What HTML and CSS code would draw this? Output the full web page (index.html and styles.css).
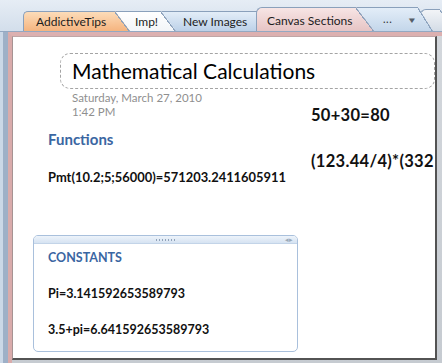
FILE: index.html
```html
<!DOCTYPE html>
<html lang="en">
<head>
  <meta charset="UTF-8" />
  <title>Canvas Sections - OneNote</title>
  <link rel="stylesheet" href="styles.css">
</head>
<body>
  <div class="app">
    <div class="tabbar">
      <div class="tab tab-orange">AddictiveTips</div>
      <div class="tab tab-white">Imp!</div>
      <div class="tab tab-blue">New Images</div>
      <div class="tab tab-active">Canvas Sections</div>
      <div class="tab tab-more"><span class="more-dots">...</span><span class="more-arrow">▼</span></div>
      <div class="tab tab-edge"></div>
    </div>

    <div class="main">
      <div class="rail"></div>
      <div class="frame">
        <div class="page">
          <div class="title-box">
            <h1>Mathematical Calculations</h1>
          </div>

          <div class="content">
            <div class="col-left">
              <div class="date">Saturday, March 27, 2010<br>1:42 PM</div>
              <h2>Functions</h2>
              <p class="calc calc-pmt">Pmt(10.2;5;56000)=571203.2411605911</p>

              <div class="outline">
                <div class="handle">
                  <span class="grip"></span>
                  <span class="resize">◂▸</span>
                </div>
                <div class="outline-body">
                  <h3>CONSTANTS</h3>
                  <p class="calc">Pi=3.141592653589793</p>
                  <p class="calc">3.5+pi=6.641592653589793</p>
                </div>
              </div>
            </div>

            <div class="col-right">
              <p class="big">50+30=80</p>
              <p class="big">(123.44/4)*(332</p>
            </div>
          </div>
        </div>
      </div>
    </div>
  </div>
</body>
</html>
```

FILE: styles.css
```css
body {
  margin: 0;
  width: 442px;
  height: 363px;
  overflow: hidden;
  font-family: Lato, 'Liberation Sans', sans-serif;
  color: #111;
  background: #d8e2ee;
}

.app {
  display: flex;
  flex-direction: column;
  height: 363px;
}

/* ---------- section tabs ---------- */

.tabbar {
  height: 32px;
  box-sizing: border-box;
  padding-left: 23px;
  display: flex;
  align-items: flex-end;
  background: linear-gradient(#e6edf5, #d3deeb);
  border-bottom: 1px solid #93a8c2;
  flex-shrink: 0;
  overflow: hidden;
}

.tab {
  --top: #fff;
  --bot: #eee;
  position: relative;
  flex-shrink: 0;
  height: 20px;
  box-sizing: border-box;
  display: flex;
  align-items: center;
  font-size: 12px;
  color: #1c1c1c;
  white-space: nowrap;
  background: linear-gradient(var(--top), var(--bot));
  border-top: 1px solid #8aa0bb;
}

.tab::after {
  content: "";
  position: absolute;
  top: -1px;
  bottom: 0;
  right: -15px;
  width: 15px;
  background:
    linear-gradient(to bottom left, transparent 50%, #8aa0bb 50%, #8aa0bb calc(50% + 1.2px), transparent calc(50% + 1.2px)),
    linear-gradient(var(--top), var(--bot));
  clip-path: polygon(0 0, 100% 100%, 0 100%);
}

.tab-orange {
  --top: #fcdcb9;
  --bot: #f5b47f;
  width: 92px;
  padding-left: 12px;
  border-left: 1px solid #8aa0bb;
  border-top-left-radius: 5px;
  z-index: 5;
}

.tab-white {
  --top: #ffffff;
  --bot: #f3f5f8;
  width: 46px;
  padding-left: 20px;
  z-index: 4;
}

.tab-blue {
  --top: #e3edf8;
  --bot: #bcd1e8;
  width: 101px;
  padding-left: 22px;
  z-index: 3;
}

.tab-active {
  --top: #f7e5e5;
  --bot: #e6c3c3;
  height: 25px;
  margin-bottom: -1px;
  margin-left: -6px;
  width: 100px;
  padding-left: 10px;
  border-left: 1px solid #8aa0bb;
  border-top-left-radius: 6px;
  z-index: 6;
}

.tab-active::after {
  right: -19px;
  width: 19px;
}

.tab-more {
  --top: #e3edf8;
  --bot: #c3d6ea;
  height: 24px;
  width: 62px;
  padding-left: 27px;
  z-index: 2;
  color: #333;
}

.more-dots {
  font-size: 11px;
  letter-spacing: 0.5px;
  margin-top: -3px;
}

.more-arrow {
  margin-left: 16px;
  font-size: 8px;
  color: #555d68;
  transform: scaleX(1.3);
}

.tab-edge {
  --top: #f2f4f7;
  --bot: #d4dce6;
  width: 20px;
  height: 22px;
  margin-left: 2px;
  border-left: 1px solid #8aa0bb;
  border-top-left-radius: 6px;
  z-index: 1;
}

/* ---------- page frame ---------- */

.main {
  flex: 1;
  display: flex;
  min-height: 0;
}

.rail {
  width: 8px;
  flex-shrink: 0;
  background: linear-gradient(to right, #cbd8e7 0 3px, #9eb0c7 3px);
}

.frame {
  flex: 1;
  display: flex;
  border-top: 4px solid #dcb0b0;
  border-left: 4px solid #d9abab;
  padding: 0 5px 3px 0;
  background: linear-gradient(#d3d7dc, #c6cbd1);
  min-width: 0;
}

.page {
  flex: 1;
  background: #fff;
  border-left: 1px solid #a69393;
  border-top: 1px solid #bfa6a6;
  border-right: 2px solid #535353;
  border-bottom: 2px solid #535353;
  padding: 16px 0 0 35px;
  overflow: hidden;
  min-width: 0;
}

.title-box {
  margin-left: 12px;
  height: 36px;
  box-sizing: border-box;
  border: 1px dashed #a4a4a4;
  border-radius: 10px;
  padding-left: 11px;
}

h1 {
  margin: 0;
  font-size: 21px;
  font-weight: 400;
  line-height: 34px;
  color: #000;
  white-space: nowrap;
}

.content {
  display: grid;
  grid-template-columns: 263px 1fr;
}

.date {
  margin: 2px 0 0 24px;
  font-size: 11.5px;
  line-height: 14px;
  color: #8f8f8f;
}

h2 {
  margin: 11px 0 0;
  font-size: 15px;
  line-height: 18px;
  color: #3a66a2;
  font-weight: 700;
}

.calc {
  margin: 0;
  font-size: 12.5px;
  line-height: 16px;
  font-weight: 700;
  white-space: nowrap;
}

.calc-pmt {
  margin-top: 21px;
  font-size: 12.9px;
}

/* ---------- outline container ---------- */

.outline {
  margin: 50px 0 0 -15px;
  width: 265px;
  height: 117px;
  box-sizing: border-box;
  border: 1px solid #a9c0dc;
  border-radius: 5px;
  overflow: hidden;
}

.handle {
  height: 7px;
  display: flex;
  align-items: center;
  justify-content: center;
  position: relative;
  background: linear-gradient(#edf3fa, #d6e3f2);
  border-bottom: 1px solid #c3d4e8;
}

.grip {
  width: 21px;
  height: 2px;
  background: radial-gradient(circle, #8fa2b9 0.8px, transparent 1px) 0 0 / 3px 2px repeat-x;
}

.resize {
  position: absolute;
  right: 4px;
  top: 0;
  font-size: 7px;
  line-height: 7px;
  color: #9aa8b8;
}

.outline-body {
  padding: 6px 0 0 14px;
}

h3 {
  margin: 0;
  font-size: 12.5px;
  line-height: 16px;
  color: #3a66a2;
  font-weight: 700;
}

.outline-body .calc {
  margin-top: 20px;
}

.col-right {
  padding-top: 16px;
  min-width: 0;
}

.big {
  margin: 0;
  font-size: 16.5px;
  line-height: 20px;
  font-weight: 700;
  letter-spacing: 0.3px;
  white-space: nowrap;
}

.big + .big {
  margin-top: 26px;
}
```
